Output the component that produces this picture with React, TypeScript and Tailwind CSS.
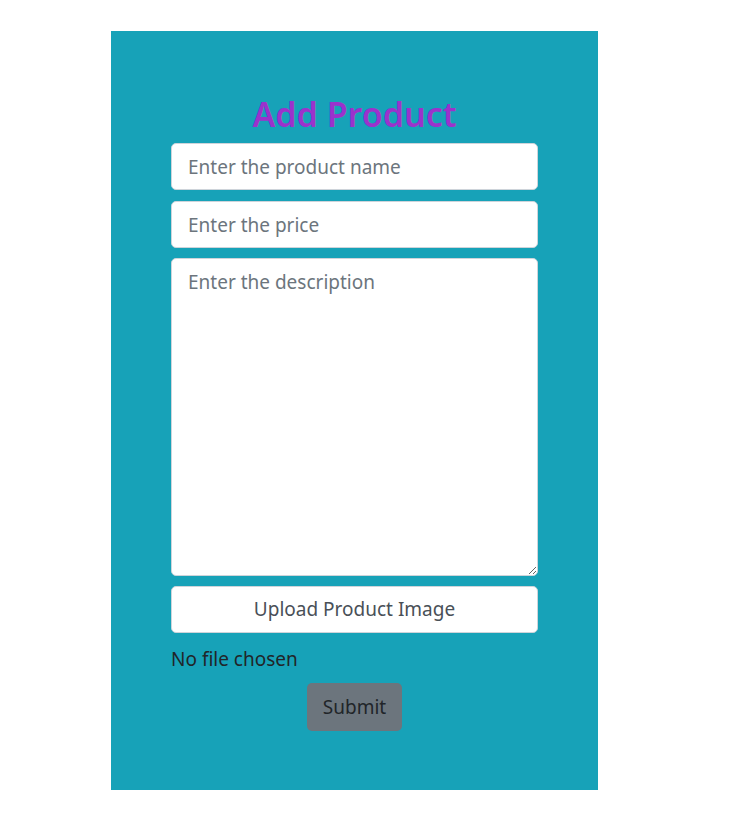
export default function App() {
  const field =
    'block w-full h-[47px] rounded-[5px] border border-[#ced4da] bg-white px-4 text-[19px] text-[#495057] placeholder:text-[#6c757d] outline-none';

  return (
    <div className="min-h-[813px] bg-white pt-[31px] font-['Noto_Sans',sans-serif]">
      <div className="ml-[111px] w-[487px] h-[759px] bg-[#17a2b8] px-[60px] pt-[64px]">
        <h2 className="text-center text-[34px] leading-[38px] font-semibold text-[#9b32cc] mb-[10px]">Add Product</h2>

        <form className="flex flex-col">
          <input className={field} placeholder="Enter the product name" />
          <input className={`${field} mt-[11px]`} placeholder="Enter the price" />
          <textarea
            className="mt-[10px] block w-full h-[318px] rounded-[5px] border border-[#ced4da] bg-white px-4 py-[8px] text-[19px] leading-[30px] text-[#495057] placeholder:text-[#6c757d] outline-none"
            placeholder="Enter the description"
          />
          <label className="mt-[10px] flex h-[47px] w-full items-center justify-center rounded-[5px] border border-[#ced4da] bg-white text-[19px] text-[#495057] cursor-pointer">
            Upload Product Image
            <input type="file" className="hidden" />
          </label>
          <p className="mt-[11px] text-[19px] leading-[30px] text-[#212529]">No file chosen</p>
          <div className="flex justify-center mt-[9px]">
            <button
              type="button"
              className="h-[48px] w-[95px] rounded-[5px] bg-[#6c757d] text-[19px] text-[#212529]"
            >
              Submit
            </button>
          </div>
        </form>
      </div>
    </div>
  );
}
